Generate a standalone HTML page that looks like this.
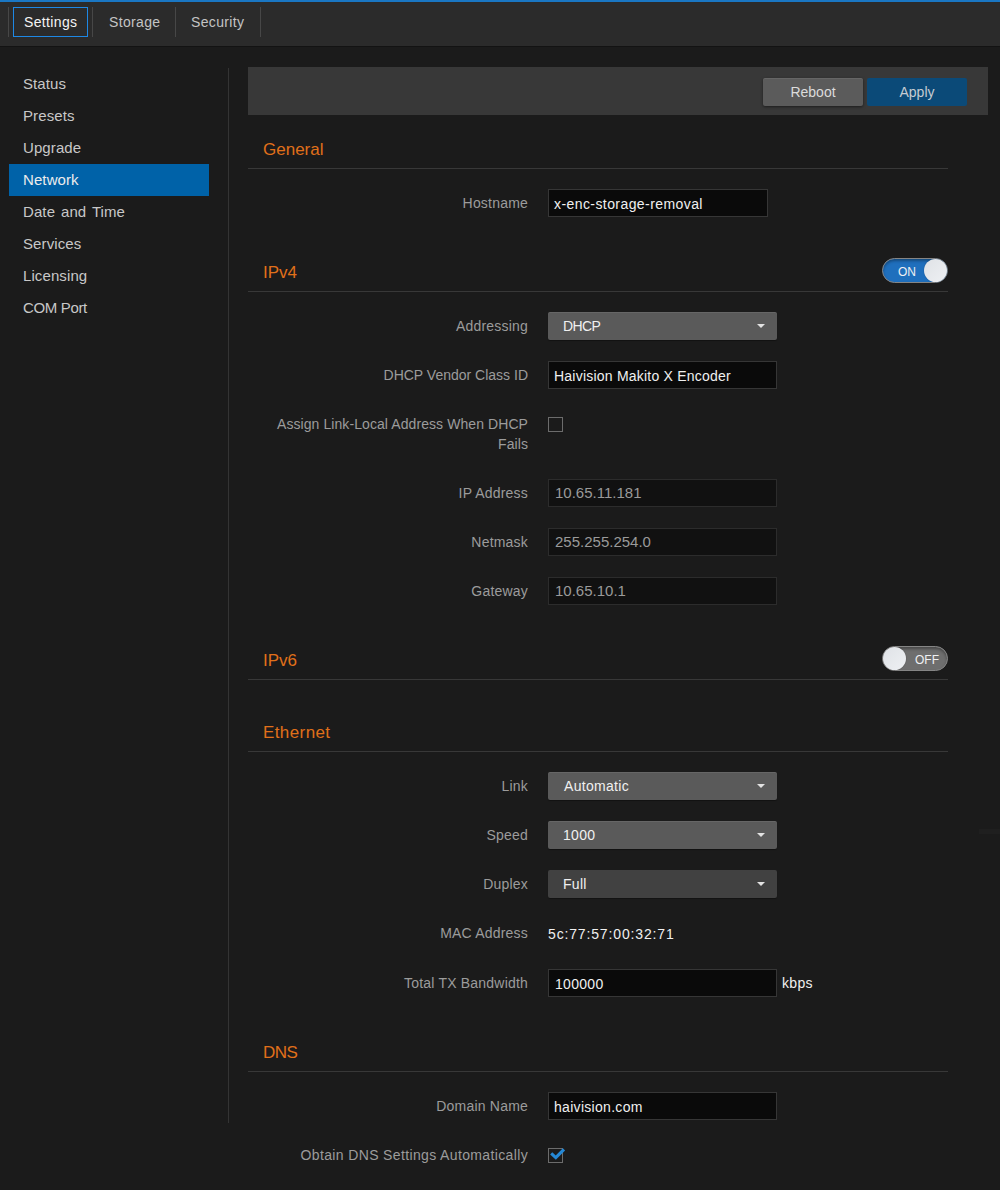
<!DOCTYPE html>
<html><head><meta charset="utf-8">
<style>
*{box-sizing:border-box;margin:0;padding:0}
html,body{width:1000px;height:1190px;overflow:hidden;background:#1b1b1b;font-family:"Liberation Sans",sans-serif;}
.a{position:absolute;white-space:nowrap}
#top{position:absolute;left:0;top:0;width:1000px;height:2px;background:#1a77c4}
#hdr{position:absolute;left:0;top:2px;width:1000px;height:44px;background:#2b2b2b}
#hdrsh{position:absolute;left:0;top:46px;width:1000px;height:1px;background:#131313}
.sep{position:absolute;top:7px;width:1px;height:30px;background:#474747}
#tabbox{position:absolute;left:13px;top:7px;width:75px;height:30px;border:1px solid #1e88e5}
.tab{position:absolute;font-size:14px;color:#c4c4c4;top:14px;line-height:16px;letter-spacing:0.35px}
.side{position:absolute;left:23px;font-size:15px;color:#c8c8c8;line-height:18px;letter-spacing:0.1px}
#act{position:absolute;left:9px;top:164px;width:200px;height:32px;background:#0062a8}
#vdiv{position:absolute;left:228px;top:68px;width:1px;height:1055px;background:#343434}
#abar{position:absolute;left:248px;top:67px;width:740px;height:48px;background:#383838}
.btn{position:absolute;top:78px;width:100px;height:28px;border-radius:2px;font-size:14px;color:#dcdcdc;text-align:center;line-height:28px}
.h{position:absolute;left:263px;font-size:17px;color:#e0701a;line-height:20px}
.hr{position:absolute;left:248px;width:700px;height:1px;background:#383838}
.lbl{position:absolute;right:472px;font-size:14px;color:#9c9c9c;line-height:16px;text-align:right;letter-spacing:0.2px}
.inp{position:absolute;left:548px;width:229px;height:28px;background:#0a0a0a;border:1px solid #363636}
.inp.dis{background:#111;border-color:#2c2c2c}
.val{position:absolute;font-size:14px;color:#f0f0f0;line-height:16px;letter-spacing:0.3px}
.val.dis{color:#9a9a9a;font-size:15px;letter-spacing:0}
.sel{position:absolute;left:548px;width:229px;height:28px;background:#5a5a5a;border-radius:2px;box-shadow:inset 0 1px 0 rgba(255,255,255,.08),0 1px 1px rgba(0,0,0,.35)}
.sel.dis{background:#414141;box-shadow:0 1px 1px rgba(0,0,0,.3)}
.car{position:absolute;left:209px;top:12px;width:0;height:0;border-left:4px solid transparent;border-right:4px solid transparent;border-top:4px solid #e2e2e2}
.cb{position:absolute;left:548px;width:15px;height:15px;border:1px solid #6c6c6c}
.tog{position:absolute;left:882px;width:66px;height:25px;border-radius:12.5px;border:1px solid #858585;box-shadow:inset 0 2px 3px rgba(0,0,0,.35)}
.knob{position:absolute;width:23px;height:23px;border-radius:50%;background:linear-gradient(135deg,#dfe2e6,#eef0f3);top:0px;box-shadow:0 0 1px rgba(0,0,0,.5)}
.togt{position:absolute;font-size:12px;color:#eef0f2;line-height:14px}
</style></head><body>
<div id="top"></div>
<div id="hdr"></div>
<div id="hdrsh"></div>
<div class="sep" style="left:8px"></div>
<div id="tabbox"></div>
<div class="tab" style="left:24px;color:#f4f4f4">Settings</div>
<div class="sep" style="left:92px"></div>
<div class="tab" style="left:109px">Storage</div>
<div class="sep" style="left:175px"></div>
<div class="tab" style="left:191px">Security</div>
<div class="sep" style="left:260px"></div>

<div id="act"></div>
<div class="side" style="top:75px">Status</div>
<div class="side" style="top:107px">Presets</div>
<div class="side" style="top:139px">Upgrade</div>
<div class="side" style="top:171px;color:#ececec">Network</div>
<div class="side" style="top:203px;word-spacing:1.6px">Date and Time</div>
<div class="side" style="top:235px">Services</div>
<div class="side" style="top:267px">Licensing</div>
<div class="side" style="top:299px;letter-spacing:-0.35px">COM Port</div>
<div id="vdiv"></div>

<div id="abar"></div>
<div class="btn" style="left:763px;background:#5b5b5b;box-shadow:inset 0 1px 0 rgba(255,255,255,.07),0 1px 3px rgba(0,0,0,.5)">Reboot</div>
<div class="btn" style="left:867px;background:#0b4a78;color:#c6ccd2">Apply</div>

<!-- General -->
<div class="h" style="top:140px">General</div>
<div class="hr" style="top:168px"></div>
<div class="lbl" style="top:195px">Hostname</div>
<div class="inp" style="top:189px;width:220px"></div>
<div class="val" style="left:554px;top:196px;letter-spacing:0.42px">x-enc-storage-removal</div>

<!-- IPv4 -->
<div class="h" style="top:263px">IPv4</div>
<div class="tog" style="top:258px;background:#1f6fbd"><div class="knob" style="left:41px"></div><div class="togt" style="left:15px;top:6px">ON</div></div>
<div class="hr" style="top:291px"></div>

<div class="lbl" style="top:318px">Addressing</div>
<div class="sel" style="top:312px"><div class="car"></div></div>
<div class="val" style="left:563px;top:318px;letter-spacing:-0.6px">DHCP</div>

<div class="lbl" style="top:367px;letter-spacing:0">DHCP Vendor Class ID</div>
<div class="inp" style="top:361px"></div>
<div class="val" style="left:554px;top:368px;letter-spacing:0.22px">Haivision Makito X Encoder</div>

<div class="lbl" style="top:414px;line-height:20px;letter-spacing:0.08px">Assign Link-Local Address When DHCP<br>Fails</div>
<div class="cb" style="top:417px"></div>

<div class="lbl" style="top:485px">IP Address</div>
<div class="inp dis" style="top:479px"></div>
<div class="val dis" style="left:555px;top:485px">10.65.11.181</div>

<div class="lbl" style="top:534px">Netmask</div>
<div class="inp dis" style="top:528px"></div>
<div class="val dis" style="left:555px;top:534px">255.255.254.0</div>

<div class="lbl" style="top:583px">Gateway</div>
<div class="inp dis" style="top:577px"></div>
<div class="val dis" style="left:555px;top:583px">10.65.10.1</div>

<!-- IPv6 -->
<div class="h" style="top:651px">IPv6</div>
<div class="tog" style="top:646px;background:#6e6e6e"><div class="knob" style="left:0px"></div><div class="togt" style="left:32px;top:6px">OFF</div></div>
<div class="hr" style="top:679px"></div>

<!-- Ethernet -->
<div class="h" style="top:723px;letter-spacing:0.4px">Ethernet</div>
<div class="hr" style="top:751px"></div>

<div class="lbl" style="top:778px">Link</div>
<div class="sel" style="top:772px"><div class="car"></div></div>
<div class="val" style="left:564px;top:778px">Automatic</div>

<div class="lbl" style="top:827px">Speed</div>
<div class="sel" style="top:821px"><div class="car"></div></div>
<div class="val" style="left:563px;top:827px">1000</div>

<div class="lbl" style="top:876px">Duplex</div>
<div class="sel dis" style="top:870px"><div class="car"></div></div>
<div class="val" style="left:563px;top:876px">Full</div>

<div class="lbl" style="top:925px">MAC Address</div>
<div class="val" style="left:548px;top:926px;letter-spacing:0.85px">5c:77:57:00:32:71</div>

<div class="lbl" style="top:975px">Total TX Bandwidth</div>
<div class="inp" style="top:969px"></div>
<div class="val" style="left:555px;top:976px">100000</div>
<div class="val" style="left:782px;top:975px">kbps</div>

<!-- DNS -->
<div class="h" style="top:1043px;letter-spacing:-0.5px">DNS</div>
<div class="hr" style="top:1071px"></div>

<div class="lbl" style="top:1098px">Domain Name</div>
<div class="inp" style="top:1092px"></div>
<div class="val" style="left:554px;top:1099px">haivision.com</div>

<div class="lbl" style="top:1147px;letter-spacing:0.36px">Obtain DNS Settings Automatically</div>
<div class="cb" style="top:1148px"></div>
<svg class="a" style="left:548px;top:1146px" width="20" height="18" viewBox="0 0 20 18"><path d="M3.2 7.4 L7.8 11.7 L16 3.4" fill="none" stroke="#2588d5" stroke-width="3.1" stroke-linecap="butt" stroke-linejoin="miter"/></svg>
<div class="a" style="left:979px;top:829px;width:21px;height:5px;background:#1f1f1f"></div>
</body></html>
